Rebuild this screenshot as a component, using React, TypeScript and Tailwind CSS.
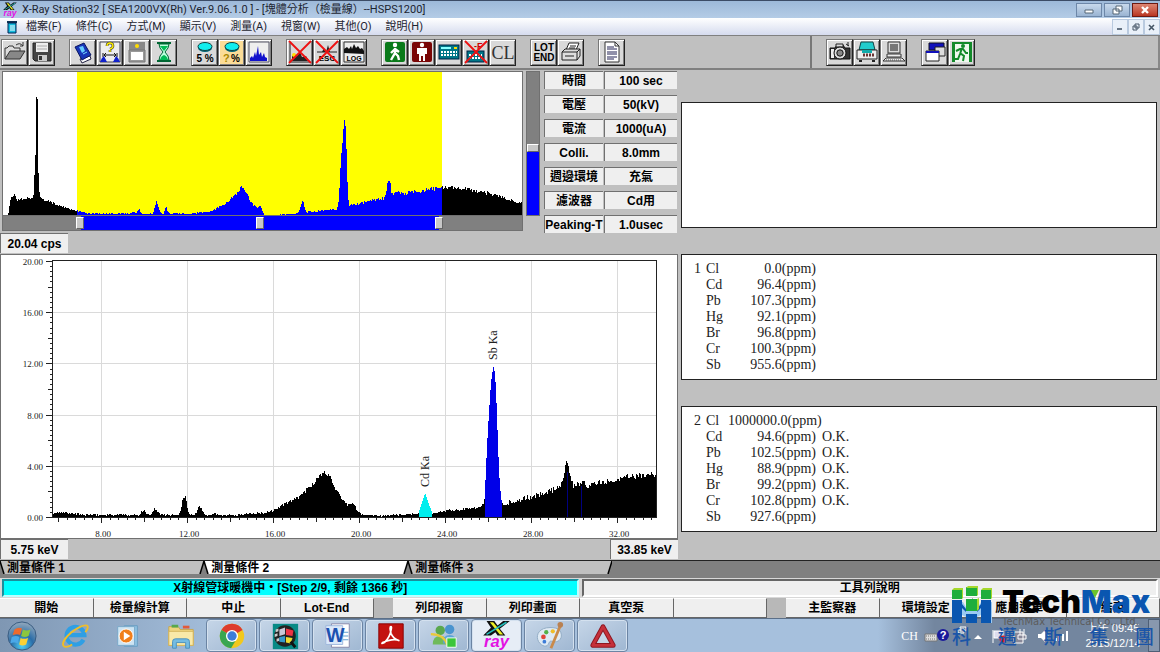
import React from "react";

type Pt = [number, number];

const noise = (n: number) => {
  const v = Math.sin(n * 12.9898 + 4.1) * 43758.5453;
  return v - Math.floor(v);
};

const heightAt = (pts: Pt[], x: number) => {
  for (let i = 1; i < pts.length; i++) {
    const [x0, h0] = pts[i - 1];
    const [x1, h1] = pts[i];
    if (x <= x1) return h0 + ((h1 - h0) * (x - x0)) / (x1 - x0);
  }
  return 0;
};

/* Builds a one-pixel-step histogram outline between two channels. */
const spectrum = (pts: Pt[], from: number, to: number, base: number, grain: number) => {
  let d = `M${from} ${base}`;
  for (let x = from; x < to; x++) {
    const h = heightAt(pts, x + 0.5);
    const jitter = h > 0.5 ? (noise(x) - 0.4) * grain * Math.min(1, 0.3 + h / 30) : 0;
    const y = base - Math.max(0, Math.round(h + jitter));
    d += `V${y}H${x + 1}`;
  }
  return d + `V${base}Z`;
};

const overview: Pt[] = [
  [6, 0], [7, 5], [9, 17], [13, 21], [15, 14], [18, 16], [31, 17], [32, 22], [33, 58], [34, 64], [34.4, 117], [35.6, 117], [36, 56],
  [37, 28], [38, 18], [40, 15], [48, 13], [53, 11], [63, 7], [75, 4], [88, 1.2], [127, 1.2], [131, 4], [134, 1.2], [137, 6],
  [140, 1], [151, 1], [153, 8], [155, 14], [157, 6], [159, 1], [162, 1], [164, 8], [167, 1.5], [190, 1.5], [205, 3], [214, 6],
  [226, 13], [233, 20], [240, 28], [244, 23], [248, 13], [254, 8], [259, 8], [262, 0], [294, 1], [297, 2], [299, 10], [301, 14], [304, 3],
  [320, 4], [335, 6], [337, 15], [339, 55], [341, 75], [342, 94], [343, 93], [344, 80], [346, 16], [347, 10], [354, 10], [368, 14],
  [383, 17], [385, 25], [386, 35], [388, 33], [390, 20], [396, 22], [402, 21], [420, 24], [440, 27], [455, 27], [480, 23], [500, 18],
  [513, 13], [522, 12],
];

const detail: Pt[] = [
  [53, 4], [65, 4], [85, 2], [139, 2], [142, 6], [145, 6], [147, 2], [151, 2], [155, 9], [159, 3], [161, 2], [178, 2], [181, 6],
  [183, 21], [186, 21], [188, 7], [190, 2], [196, 3], [200, 11], [204, 3], [207, 2], [211, 2], [214, 4], [218, 2], [240, 2],
  [250, 3], [265, 4], [275, 7], [285, 13], [297, 18], [307, 27], [317, 37], [324, 44], [330, 41], [338, 23], [342, 16], [347, 12],
  [354, 13], [358, 5], [362, 2], [380, 1], [400, 2], [418, 3], [421, 11], [425, 24], [429, 12], [433, 3], [445, 6], [460, 7],
  [480, 10], [484, 13], [485, 26], [487, 70], [489, 104], [491, 134], [493, 149], [494, 151], [496, 130], [497, 98], [498, 75],
  [499, 45], [501, 20], [502, 13], [510, 14], [530, 19], [550, 25], [559, 29], [563, 37], [566, 54], [568, 52], [570, 42],
  [573, 31], [578, 31], [582, 36], [587, 31], [600, 34], [620, 38], [640, 41], [657, 43],
];

const CJK = "font-['Liberation_Sans','Noto_Sans_CJK_TC',sans-serif]";

function ToolButton({ label, active, children }: { label: string; active?: boolean; children: React.ReactNode }) {
  return (
    <button
      type="button"
      aria-label={label}
      className={`flex size-[27px] items-center justify-center border border-[#222] border-t-[#777] border-l-[#777] shadow-[inset_1px_1px_0_#fff,inset_-1px_-1px_0_#808080] ${
        active ? "bg-[#fbdc97]" : "bg-[#d9d9d9]"
      }`}
    >
      <svg viewBox="0 0 24 24" className="size-6" aria-hidden="true">
        {children}
      </svg>
    </button>
  );
}

const Cross = () => <path d="M1 1L23 23M23 1L1 23" stroke="#e11" strokeWidth="1.8" fill="none" />;

const Disc = () => (
  <>
    <ellipse cx="12" cy="8" rx="7" ry="4" fill="#067" />
    <ellipse cx="12" cy="6.5" rx="7" ry="4" fill="#1ee" stroke="#144" strokeWidth="1" />
  </>
);

function Toolbar() {
  return (
    <div className="flex h-[35px] border-t border-b-2 border-[#808080] bg-[#c0c0c0] pl-px">
      <div className="flex flex-1 items-center gap-3.5 border-r-2 border-[#777]">
        <div className="flex">
          <ToolButton label="Open">
            <path d="M2 19V8h2l2-2h4l1 2h6v4" fill="#ddd" stroke="#333" />
            <path d="M2 19l5-8h15l-5 8z" fill="#888" stroke="#333" />
            <path d="M13 5q4-3 7 1M20 2v4h-3" fill="none" stroke="#333" />
          </ToolButton>
          <ToolButton label="Save">
            <path d="M3 3h18v18H5l-2-2z" fill="#444" stroke="#222" />
            <path d="M6 3h12v9H6z" fill="#eee" />
            <path d="M8 15h9v6H8z" fill="#ccc" />
            <path d="M9 16h3v4H9z" fill="#333" />
            <path d="M7 6h10M7 9h10" stroke="#aaa" />
          </ToolButton>
        </div>
        <div className="flex">
          <ToolButton label="Log book">
            <path d="M9 19l10-3 1 3-9 4z" fill="#fff" stroke="#224" />
            <path d="M4 7l9-4 7 12-9 5z" fill="#1836b8" stroke="#0a1660" />
            <path d="M8 7l4-1 2 5-3 2z" fill="#6cf" />
            <path d="M12 14l4-2" stroke="#7df" />
          </ToolButton>
          <ToolButton label="Qualitative analysis">
            <path d="M2 2h20v20H2z" fill="#eee" stroke="#445" />
            <path d="M9 6q0-3 3-3t3 3q0 2-3 3M12 10v2" fill="none" stroke="#333" strokeWidth="2.600" />
            <path d="M9 6q0-3 3-3t3 3q0 2-3 3M12 10v2" fill="none" stroke="#fe0" strokeWidth="1.400" />
            <path d="M5 13v4M19 13v4M6 15h12M8 13l-2 2 2 2M16 13l2 2-2 2" fill="none" stroke="#111" />
            <path d="M2 22l2-4 2-2 3 6zM15 22l3-6 2 2 2 4z" fill="#12c" />
          </ToolButton>
          <ToolButton label="Sample">
            <path d="M4 2h16v8H4z" fill="#888" />
            <path d="M4 10h16v12H4z" fill="#999" stroke="#777" />
            <path d="M6 12h12v8H6z" fill="#fff" />
            <circle cx="12" cy="6" r="2" fill="#fd0" />
          </ToolButton>
          <ToolButton label="Timer">
            <path d="M5 3h14M5 21h14" stroke="#063" strokeWidth="2" />
            <path d="M7 4h10q0 4-4 8 4 4 4 8H7q0-4 4-8-4-4-4-8z" fill="#bfd" stroke="#063" />
            <path d="M8 6h8l-4 5zM8 20q1-4 4-5 3 1 4 5z" fill="#0b5" />
          </ToolButton>
        </div>
        <div className="flex">
          <ToolButton label="Five percent">
            <Disc />
            <text x="12" y="22" textAnchor="middle" className="font-['Liberation_Sans',sans-serif] text-[10px] font-bold">5 %</text>
          </ToolButton>
          <ToolButton label="Unknown percent" active>
            <Disc />
            <text x="3" y="22" className="fill-[#a80] font-['Liberation_Sans',sans-serif] text-[11px] font-bold">?</text>
            <text x="11" y="22" className="font-['Liberation_Sans',sans-serif] text-[10px] font-bold">%</text>
          </ToolButton>
          <ToolButton label="Spectrum">
            <path d="M2 2h20v20H2z" fill="#eee" stroke="#556" />
            <path d="M3 21v-3l2-2 1 2 2-6 1 4 2-10 1 9 2-3 1 5 2-4 1 4 2 1v3z" fill="#11c" />
          </ToolButton>
        </div>
        <div className="flex">
          <ToolButton label="Peak off">
            <path d="M2 22V3M2 22h20" stroke="#222" fill="none" />
            <path d="M4 21v-5l3-2 2 2 3-4 2 5 4-1 3 5z" fill="#222" />
            <circle cx="6" cy="15" r="2" fill="#fd0" />
            <Cross />
          </ToolButton>
          <ToolButton label="Escape off">
            <path d="M2 12h20" stroke="#222" />
            <path d="M7 12l2-4 2 4 2-7 2 7z" fill="#222" />
            <text x="12" y="21" textAnchor="middle" className="font-['Liberation_Sans',sans-serif] text-[8px] font-bold">ESC</text>
            <Cross />
          </ToolButton>
          <ToolButton label="Logarithmic scale">
            <path d="M2 2h20v20H2z" fill="#eee" stroke="#333" />
            <path d="M2 13V9l3-2 2 2 2-3 1 3 2-5 2 4 2-2 2 3 2-1 2 3v3z" fill="#111" />
            <text x="12" y="21" textAnchor="middle" className="font-['Liberation_Sans',sans-serif] text-[7px] font-bold">LOG</text>
          </ToolButton>
        </div>
        <div className="flex">
          <ToolButton label="Start">
            <rect x="2" y="2" width="20" height="20" rx="2" fill="#0a7a1a" />
            <circle cx="12" cy="5" r="2.2" fill="#fff" />
            <path d="M12 8v6M12 9l-4 4M12 9l4 3 M12 13l-4 7M12 13l3 3 1 4" stroke="#fff" strokeWidth="2.4" fill="none" />
          </ToolButton>
          <ToolButton label="Stop">
            <rect x="2" y="2" width="20" height="20" rx="2" fill="#7a0606" />
            <circle cx="12" cy="5" r="2.2" fill="#fff" />
            <path d="M7 8h10v6h-2v7h-2v-5h-2v5H9v-7H7z" fill="#fff" />
          </ToolButton>
          <ToolButton label="Calculate">
            <rect x="2" y="5" width="20" height="14" fill="#078" stroke="#024" />
            <path d="M4 8h10" stroke="#8ff" strokeWidth="2" />
            <path d="M4 12h16M4 15h16" stroke="#fff" strokeWidth="2" strokeDasharray="2 1" />
            <path d="M17 8h3" stroke="#fd0" strokeWidth="2" />
          </ToolButton>
          <ToolButton label="Calculation off">
            <rect x="3" y="11" width="17" height="11" fill="#078" stroke="#024" />
            <path d="M5 15h13M5 18h13" stroke="#fff" strokeWidth="2" strokeDasharray="2 1" />
            <text x="10" y="9" className="fill-[#c00] font-['Liberation_Sans',sans-serif] text-[9px] font-bold">-F</text>
            <Cross />
          </ToolButton>
          <ToolButton label="Clear">
            <text x="12" y="19" textAnchor="middle" className="fill-[#333] font-['Liberation_Serif',serif] text-[18px]">CL</text>
          </ToolButton>
        </div>
        <div className="flex">
          <ToolButton label="Lot end">
            <text x="12" y="11" textAnchor="middle" className="font-['Liberation_Sans',sans-serif] text-[10px] font-bold">LOT</text>
            <text x="12" y="21" textAnchor="middle" className="font-['Liberation_Sans',sans-serif] text-[10px] font-bold">END</text>
          </ToolButton>
          <ToolButton label="Print">
            <path d="M7 10l3-7h10l-3 7z" fill="#fff" stroke="#222" />
            <path d="M3 12l3-3h15v7l-3 4H3z" fill="#ddd" stroke="#222" />
            <path d="M3 12h15l3-3M18 12v8M6 16h9M11 6h6M10 8h6" fill="none" stroke="#222" />
          </ToolButton>
        </div>
        <ToolButton label="Report">
          <path d="M5 2h10l4 4v16H5z" fill="#fff" stroke="#333" />
          <path d="M15 2v4h4" fill="none" stroke="#333" />
          <path d="M7 7h7M7 9h10M7 12h10M7 14h10M7 17h10M7 19h7" stroke="#225" />
        </ToolButton>
      </div>
      <div className="flex w-[30%] items-center gap-3.5 border-r-2 border-[#888] pl-3.5">
        <div className="flex">
          <ToolButton label="Camera">
            <path d="M2 8h5l2-3h6l2 3h5v11H2z" fill="#333" stroke="#111" />
            <path d="M8 4h7v3H8z" fill="#ddd" stroke="#222" />
            <path d="M3 9h3v9H3z" fill="#eee" />
            <circle cx="12" cy="13" r="6" fill="#ddd" stroke="#111" />
            <circle cx="12" cy="13" r="3.2" fill="#888" stroke="#111" />
            <path d="M18 4l3 2M20 2v4" stroke="#222" />
          </ToolButton>
          <ToolButton label="Instrument">
            <path d="M6 2h12l2 8H4z" fill="#2cc" stroke="#144" />
            <path d="M2 10h20v9H2z" fill="#eee" stroke="#222" />
            <path d="M7 10h10v3H7z" fill="#1aa" />
            <path d="M8 15h11" stroke="#633" strokeWidth="3" strokeDasharray="2 1" />
            <path d="M4 20h3v2H4zM17 20h3v2h-3z" fill="#222" />
          </ToolButton>
          <ToolButton label="Computer">
            <path d="M6 2h12v11H6z" fill="#ddd" stroke="#333" />
            <path d="M8 4h8v7H8z" fill="#777" />
            <path d="M5 14h14v3H5zM4 18h16l3 3H1z" fill="#eee" stroke="#333" />
            <path d="M4 20h16" stroke="#555" strokeDasharray="1 1" />
          </ToolButton>
        </div>
        <div className="flex">
          <ToolButton label="Windows">
            <path d="M6 3h15v7H6z" fill="#11b" stroke="#112" />
            <path d="M12 7h10v9H12z" fill="#ddd" stroke="#222" />
            <path d="M3 11h13v10H3z" fill="#fff" stroke="#222" />
            <path d="M3 12h13" stroke="#11b" strokeWidth="2" />
          </ToolButton>
          <ToolButton label="Exit">
            <path d="M2 2h20v20H2z" fill="#138a2a" />
            <path d="M5 4h14v18H5z" fill="#eef8ee" />
            <circle cx="13" cy="6" r="2" fill="#138a2a" />
            <path d="M12 8l-2 6M6 11l4-2h3l3 4h2M10 13l4 3-1 5M10 14l-2 5H5" stroke="#138a2a" strokeWidth="2" fill="none" />
          </ToolButton>
        </div>
      </div>
    </div>
  );
}

function XrayMark({ className }: { className: string }) {
  return (
    <svg viewBox="0 0 28 28" className={className} aria-hidden="true">
      <path d="M5 1h7l3 4 5-4h6l-9 7 5 6h-7l-2-3-4 3H2l7-7z" fill="#111" />
      <path d="M8 2h3l9 11h-3z" fill="#ee2" />
      <path d="M23 2L5 13" stroke="#2bb" strokeWidth="1.5" />
      <text x="14" y="24" textAnchor="middle" className="fill-[#e312e3] font-['Liberation_Sans',sans-serif] text-[15px] font-bold italic">ray</text>
    </svg>
  );
}

const MENUS = ["檔案(F)", "條件(C)", "方式(M)", "顯示(V)", "測量(A)", "視窗(W)", "其他(O)", "說明(H)"];

function Header() {
  return (
    <header className="font-['Roboto','Noto_Sans_CJK_TC',sans-serif] text-[11px] text-[#1c2430]">
      <div className="flex h-[18px] items-center border-t border-[#3c4c66] bg-linear-to-b from-[#9db9d9] to-[#b4cce6] pr-0.5">
        <XrayMark className="ml-0.5 size-4" />
        <h1 className="ml-1 flex-1 leading-4 whitespace-nowrap">X-Ray Station32 [ SEA1200VX(Rh) Ver.9.06.1.0 ] - [塊體分析（檢量線）--HSPS1200]</h1>
        <div className="flex gap-0.5">
          <button type="button" aria-label="Minimize" className="flex h-3.5 w-[26px] items-center justify-center border border-[#6d87a8] bg-linear-to-b from-[#c8d9ec] to-[#9ab4d2]">
            <svg viewBox="0 0 12 10" className="h-2.5 w-3"><path d="M2 5h8v3H2z" fill="#fff" stroke="#567" /></svg>
          </button>
          <button type="button" aria-label="Restore" className="flex h-3.5 w-[26px] items-center justify-center border border-[#6d87a8] bg-linear-to-b from-[#c8d9ec] to-[#9ab4d2]">
            <svg viewBox="0 0 12 10" className="h-2.5 w-3"><path d="M5 1h6v5H5zM2 4h6v5H2z" fill="#fff" stroke="#567" /></svg>
          </button>
          <button type="button" aria-label="Close" className="flex h-3.5 w-[26px] items-center justify-center border border-[#6b1a12] bg-linear-to-b from-[#dc8573] to-[#b93420]">
            <svg viewBox="0 0 12 10" className="h-2.5 w-3"><path d="M3 2l6 6M9 2L3 8" stroke="#fff" strokeWidth="2.4" /></svg>
          </button>
        </div>
      </div>
      <div className="flex h-[17px] items-center bg-linear-to-b from-white to-[#d5dbee]">
        <svg viewBox="0 0 12 14" className="ml-1.5 h-3.5 w-3" aria-hidden="true">
          <path d="M1 1h10v2H1z" fill="#135" />
          <path d="M2 3h8v10H2z" fill="#1bd" stroke="#025" />
          <path d="M4 6h5M4 8h5M4 10h5" stroke="#fff" />
        </svg>
        <nav className="ml-2 flex flex-1 gap-3.5 whitespace-nowrap">
          {MENUS.map((m) => (
            <button key={m} type="button" className="leading-4">{m}</button>
          ))}
        </nav>
        <div className="flex">
          <button type="button" aria-label="Minimize document" className="flex h-4 w-4 items-center justify-center border border-[#b9cadf] bg-[#e9f0f9]">
            <svg viewBox="0 0 10 10" className="size-2.5"><path d="M2 7h5" stroke="#456" strokeWidth="1.6" /></svg>
          </button>
          <button type="button" aria-label="Restore document" className="flex h-4 w-4 items-center justify-center border border-[#b9cadf] bg-[#e9f0f9]">
            <svg viewBox="0 0 10 10" className="size-2.5"><path d="M4 2h4v4H4zM2 4h4v4H2z" fill="#e9f0f9" stroke="#456" /></svg>
          </button>
          <button type="button" aria-label="Close document" className="flex h-4 w-4 items-center justify-center border border-[#b9cadf] bg-[#e9f0f9]">
            <svg viewBox="0 0 10 10" className="size-2.5"><path d="M2 3l5 5M7 3L2 8" stroke="#456" strokeWidth="1.6" /></svg>
          </button>
        </div>
      </div>
    </header>
  );
}

const RANGE_THUMB =
  "[&::-webkit-slider-thumb]:pointer-events-auto [&::-webkit-slider-thumb]:appearance-none [&::-webkit-slider-thumb]:h-3 [&::-webkit-slider-thumb]:w-2 [&::-webkit-slider-thumb]:bg-[#c8c8c8] [&::-webkit-slider-thumb]:border [&::-webkit-slider-thumb]:border-white [&::-webkit-slider-thumb]:border-r-[#666] [&::-webkit-slider-thumb]:border-b-[#666]";

function Overview() {
  return (
    <div className="flex gap-[3px] pt-px pl-0.5">
      <div className="min-w-0 flex-1">
        <svg viewBox="0 0 521 145" className="block w-full" shapeRendering="crispEdges" role="img" aria-label="Full spectrum">
          <rect width="521" height="145" fill="#fff" />
          <rect x="75" width="365" height="145" fill="#ff0" />
          <path d={spectrum(overview, 5, 75, 144, 3)} fill="#000" />
          <path d={spectrum(overview, 75, 440, 144, 4)} fill="#00f" />
          <path d={spectrum(overview, 440, 521, 144, 4)} fill="#000" />
          <rect x="0.5" y="0.5" width="520" height="144" fill="none" stroke="#707070" />
        </svg>
        <div className="relative flex h-[15px] border border-t-0 border-[#707070] bg-[#808080]">
          <div className="ml-[15%] w-[69%] bg-[#00f]" />
          {[14.3, 49.5, 84.6].map((v, i) => (
            <input
              key={v}
              type="range"
              min={0}
              max={100}
              step={0.1}
              defaultValue={v}
              aria-label={["Low energy limit", "Center energy", "High energy limit"][i]}
              className={`pointer-events-none absolute inset-0 m-0 h-full w-full appearance-none bg-transparent ${RANGE_THUMB}`}
            />
          ))}
        </div>
      </div>
      <div className="relative flex h-[145px] w-3.5 flex-col justify-end border border-[#707070] bg-[#808080]">
        <div className="h-[45%] bg-[#00f]" />
        <input
          type="range"
          min={0}
          max={100}
          defaultValue={47}
          aria-label="Vertical scale"
          className="absolute inset-0 m-0 h-full w-full appearance-none bg-transparent [direction:rtl] [writing-mode:vertical-lr] [&::-webkit-slider-thumb]:h-2 [&::-webkit-slider-thumb]:w-3 [&::-webkit-slider-thumb]:appearance-none [&::-webkit-slider-thumb]:border [&::-webkit-slider-thumb]:border-white [&::-webkit-slider-thumb]:border-r-[#666] [&::-webkit-slider-thumb]:border-b-[#666] [&::-webkit-slider-thumb]:bg-[#c8c8c8]"
        />
      </div>
      <Parameters />
    </div>
  );
}

const PARAMS = [
  ["時間", "100 sec"],
  ["電壓", "50(kV)"],
  ["電流", "1000(uA)"],
  ["Colli.", "8.0mm"],
  ["週邊環境", "充氣"],
  ["濾波器", "Cd用"],
  ["Peaking-T", "1.0usec"],
];

function Parameters() {
  const cell = "h-[18px] border-t border-l border-[#707070] bg-[#efefef] p-0 text-center leading-4 font-bold whitespace-nowrap";
  return (
    <table className="-my-1.5 w-[135px] table-fixed border-separate border-spacing-x-px border-spacing-y-1.5 text-xs">
      <tbody>
        {PARAMS.map(([k, v]) => (
          <tr key={k}>
            <th scope="row" className={`w-[59px] ${cell}`}>{k}</th>
            <td className={cell}>{v}</td>
          </tr>
        ))}
      </tbody>
    </table>
  );
}

const X_TICKS = [8, 12, 16, 20, 24, 28, 32];
const Y_TICKS = [0, 4, 8, 12, 16, 20];
const xPos = (kev: number) => Math.round(101 + (kev - 8) * 21.5);
const yPos = (cps: number) => Math.round(263 - cps * 12.8);

function DetailChart() {
  const minorX = Array.from({ length: 70 }, (_, i) => 6 + i * 0.4).filter((k) => k <= 33.8);
  const minorY = Array.from({ length: 51 }, (_, i) => i * 0.4);
  const axis = "fill-[#222] font-['Liberation_Serif',serif] text-[9px]";
  const label = "fill-[#222] font-['Liberation_Serif',serif] text-xs";
  return (
    <svg viewBox="0 0 678 285" className="block w-full bg-white" role="img" aria-label="Spectrum in cps against keV">
      <g shapeRendering="crispEdges">
        {X_TICKS.map((k) => <path key={k} d={`M${xPos(k) + 0.5} 7V263`} stroke="#dadada" />)}
        {Y_TICKS.slice(1, 5).map((c) => <path key={c} d={`M53 ${yPos(c) + 0.5}H657`} stroke="#dadada" />)}
        <path d={spectrum(detail, 53, 419, 263, 5)} fill="#000" />
        <path d={spectrum(detail, 419, 432, 263, 0)} fill="#0ee" />
        <path d={spectrum(detail, 432, 485, 263, 4)} fill="#000" />
        <path d={spectrum(detail, 485, 502, 263, 0)} fill="#0000e8" />
        <path d={spectrum(detail, 502, 657, 263, 6)} fill="#000" />
        <path d="M567.5 218V263M581.5 232V263" stroke="#000080" />
        <path d="M53 6.5H657M656.5 6V263M52.5 6V263.5H657" fill="none" stroke="#222" />
        {minorY.map((c) => <path key={c} d={`M50 ${yPos(c) + 0.5}H53`} stroke="#222" />)}
        {[2, 6, 10, 14, 18].map((c) => <path key={c} d={`M48 ${yPos(c) + 0.5}H53`} stroke="#222" />)}
        {Y_TICKS.map((c) => <path key={c} d={`M46 ${yPos(c) + 0.5}H53`} stroke="#222" />)}
        {minorX.map((k) => <path key={k} d={`M${xPos(k) + 0.5} 263V266`} stroke="#222" />)}
        {[6, 10, 14, 18, 22, 26, 30].map((k) => <path key={k} d={`M${xPos(k) + 0.5} 263V268`} stroke="#222" />)}
        {X_TICKS.map((k) => <path key={k} d={`M${xPos(k) + 0.5} 263V269`} stroke="#222" />)}
        <rect x="0.5" y="0.5" width="677" height="284" fill="none" stroke="#707070" />
      </g>
      {Y_TICKS.map((c) => <text key={c} x="43" y={yPos(c) + 4} textAnchor="end" className={axis}>{c.toFixed(2)}</text>)}
      {X_TICKS.map((k) => <text key={k} x={xPos(k) + 2} y="283" textAnchor="middle" className={axis}>{k.toFixed(2)}</text>)}
      <text transform="translate(429 233) rotate(-90)" className={label}>Cd Ka</text>
      <text transform="translate(497 106) rotate(-90)" className={label}>Sb Ka</text>
    </svg>
  );
}

type Row = [string, string, string?];

const RESULT_1: Row[] = [
  ["Cl", "0.0(ppm)"], ["Cd", "96.4(ppm)"], ["Pb", "107.3(ppm)"], ["Hg", "92.1(ppm)"],
  ["Br", "96.8(ppm)"], ["Cr", "100.3(ppm)"], ["Sb", "955.6(ppm)"],
];
const RESULT_2: Row[] = [
  ["Cl", "1000000.0(ppm)"], ["Cd", "94.6(ppm)", "O.K."], ["Pb", "102.5(ppm)", "O.K."], ["Hg", "88.9(ppm)", "O.K."],
  ["Br", "99.2(ppm)", "O.K."], ["Cr", "102.8(ppm)", "O.K."], ["Sb", "927.6(ppm)"],
];

function Result({ index, rows }: { index: number; rows: Row[] }) {
  return (
    <div className="border border-[#222] bg-white py-1.5 pl-3">
      <table className="table-fixed border-collapse font-['Liberation_Serif',serif] text-sm leading-4 whitespace-nowrap text-[#222]">
        <colgroup>
          <col className="w-3" />
          <col className="w-[22px]" />
          <col className="w-[88px]" />
          <col className="w-10" />
        </colgroup>
        <tbody>
          {rows.map(([el, value, verdict], i) => {
            const wide = value.length > 12;
            return (
              <tr key={el}>
                <td className="p-0">{i === 0 ? index : ""}</td>
                <th scope="row" className="p-0 text-left font-normal">{el}</th>
                <td colSpan={wide ? 2 : 1} className={wide ? "p-0 text-left" : "p-0 text-right"}>{value}</td>
                {!wide && <td className="p-0 pl-1.5">{verdict ?? ""}</td>}
              </tr>
            );
          })}
        </tbody>
      </table>
    </div>
  );
}

function Readout({ children }: { children: React.ReactNode }) {
  return <output className="flex h-5 w-[68px] items-center justify-center border-t border-l border-[#707070] bg-[#efefef] text-xs font-bold whitespace-nowrap">{children}</output>;
}

function Tabs() {
  return (
    <div role="tablist" className="flex h-[18px] items-start border-t border-[#222] bg-[#808080]">
      {["測量條件 1", "測量條件 2", "測量條件 3"].map((t, i) => (
        <button
          key={t}
          type="button"
          role="tab"
          aria-selected={i === 1}
          className={`flex h-[13px] w-[17.6%] items-center justify-between text-xs leading-3 font-bold ${i === 1 ? "bg-white" : "bg-[#c0c0c0]"}`}
        >
          <span className="flex items-center gap-0.5">
            <svg viewBox="0 0 5 13" className="h-[13px] w-[5px]"><path d="M0 0l4 13H0z" fill="#808080" /><path d="M0 0l4 13" stroke="#000" strokeWidth="1.5" /></svg>
            {t}
          </span>
          <svg viewBox="0 0 5 13" className="h-[13px] w-[5px]"><path d="M5 0L1 13h4z" fill="#808080" /><path d="M5 0L1 13" stroke="#000" strokeWidth="1.5" /></svg>
        </button>
      ))}
    </div>
  );
}

const FUNCTIONS = [
  ["開始", "檢量線計算", "中止", "Lot-End"],
  ["列印視窗", "列印畫面", "真空泵", ""],
  ["主監察器", "環境設定", "應用選單", "結束"],
];

function TaskIcon({ name }: { name: string }) {
  const shapes: Record<string, React.ReactNode> = {
    start: (
      <>
        <defs>
          <radialGradient id="orb" cx="50%" cy="85%" r="80%">
            <stop offset="0" stopColor="#4fd0f5" />
            <stop offset="0.5" stopColor="#2a6da8" />
            <stop offset="1" stopColor="#8aa3ba" />
          </radialGradient>
        </defs>
        <circle cx="16" cy="16" r="15" fill="url(#orb)" stroke="#35597e" />
        <path d="M8 9q4-3 8-1l-2 7q-3-2-8 0z" fill="#ee6a2c" />
        <path d="M17 9q4 2 8 0l-2 7q-4 2-8 0z" fill="#8cc63e" />
        <path d="M5 17q5-2 8 0l-1.500 7q-4-2-8 0z" fill="#4aa8e8" />
        <path d="M14.500 18q3 2 8 0l-2 7q-4 2-7.500 0z" fill="#fcd033" />
      </>
    ),
    ie: (
      <>
        <path d="M25 20a9.500 9.500 0 1 1 1-5H8" fill="none" stroke="#2f9fe4" strokeWidth="4.500" />
        <path d="M4 27C-1 20 22 2 29 5q2 2-2 7M4 27q3 2 9-2" fill="none" stroke="#f0bd28" strokeWidth="2" />
      </>
    ),
    media: (
      <>
        <path d="M12 5h14v22H12z" fill="#8ec1e2" stroke="#6a9dc2" />
        <path d="M5 6h18v20H5z" fill="#cde4f3" stroke="#78a7c9" />
        <circle cx="14" cy="16" r="7.500" fill="#f07e1a" stroke="#fff" />
        <path d="M11.500 11.500l7 4.500-7 4.500z" fill="#fff" />
      </>
    ),
    folder: (
      <>
        <path d="M3 6h10l2 3h14v17H3z" fill="#eed57e" stroke="#c9a64c" />
        <path d="M6 4h7v3H6z" fill="#58a84c" /><path d="M18 5h7v3h-7z" fill="#e25a3a" />
        <path d="M3 11h26v15H3z" fill="#f9e9a8" stroke="#d3b45c" />
        <path d="M7 29v-7q0-3 3-3h12q3 0 3 3v7h-4v-6H11v6z" fill="#74bce2" stroke="#4a90bd" />
      </>
    ),
    chrome: (
      <>
        <circle cx="16" cy="16" r="13" fill="#f2c81c" />
        <path d="M16 16L4.700 9.500A13 13 0 0 1 27.300 9.500z" fill="#dd3b2d" />
        <path d="M16 16L4.700 9.500A13 13 0 0 0 15 29l6-10z" fill="#3aa650" />
        <circle cx="16" cy="16" r="6.500" fill="#fff" /><circle cx="16" cy="16" r="5" fill="#3d7dd8" />
      </>
    ),
    flag: (
      <>
        <path d="M3 3h27v27H3z" fill="#078a86" />
        <circle cx="16" cy="16" r="11.500" fill="#222" />
        <path d="M6 9l3-1v3l-3 1zM5 14l3-1v3l-3 1zM7 19l3-1v3l-3 1z" fill="#ccc" />
        <path d="M10 9l6-2v7l-6 2z" fill="#c8c8d8" /><path d="M17 8l8 2-1 6-7-1z" fill="#e34" />
        <path d="M10 17l6-1v7l-6-1z" fill="#39c" /><path d="M17 17l7 1-2 6-5-1z" fill="#ed3" />
        <path d="M22 22l5 6" stroke="#111" strokeWidth="3" />
      </>
    ),
    word: (
      <>
        <path d="M9 3h19v25H9z" fill="#fff" stroke="#88a" /><path d="M21 12h6M21 16h6M21 20h6" stroke="#59c" />
        <path d="M3 5h18v20H3z" fill="#dce9fa" stroke="#9db6dc" />
        <text x="13" y="22" textAnchor="middle" className="fill-[#1c52b0] font-['Liberation_Sans',sans-serif] text-[21px] font-bold">W</text>
      </>
    ),
    pdf: (
      <>
        <path d="M3 3h26v26H3z" fill="#c3120f" stroke="#800" />
        <path d="M16 6q-2 0 0 7 2 6 9 8-6-3-18 2-2 2 2 0 6-6 7-13 1-4 0-4z" fill="none" stroke="#fff" strokeWidth="1.800" />
      </>
    ),
    people: (
      <>
        <circle cx="12" cy="10" r="5" fill="#5aa84e" /><circle cx="22" cy="9" r="5" fill="#4a94cf" />
        <path d="M4 25q0-9 8-9t8 9z" fill="#6fba5a" /><path d="M15 24q0-9 7-9t7 9z" fill="#5ba3d9" />
        <path d="M2 14q14 0 18 12" fill="none" stroke="#e9c93c" strokeWidth="2.500" />
        <path d="M19 18h10v10H19z" fill="#3cc63a" stroke="#fff" />
      </>
    ),
    paint: (
      <>
        <path d="M16 7C5 7 1 14 3 20s9 9 11 5 2-4 6-3 9-2 8-8-6-7-12-7z" fill="#dfeaf4" stroke="#8faac2" />
        <circle cx="9" cy="17" r="2.500" fill="#e0453a" /><circle cx="12" cy="12" r="2.300" fill="#54b148" /><circle cx="19" cy="11" r="2.300" fill="#f0bd28" />
        <circle cx="10" cy="22" r="2" fill="#3d7dd8" />
        <path d="M17 29L27 5" stroke="#c98a4a" strokeWidth="3" /><circle cx="27" cy="4" r="3" fill="#b98152" />
      </>
    ),
    triangle: (
      <>
        <path d="M16 6L5 26h22z" fill="#c5d5e7" stroke="#8d1620" strokeWidth="5" strokeLinejoin="round" />
        <path d="M16 6L5 26h22z" fill="none" stroke="#c5303a" strokeWidth="3" strokeLinejoin="round" />
      </>
    ),
  };
  return <svg viewBox="0 0 32 32" className="size-[30px]" aria-hidden="true">{shapes[name]}</svg>;
}

function Taskbar() {
  return (
    <div className="flex h-[34px] items-center border-t border-[#5b6f88] bg-linear-to-r from-[#7f97b3] via-[#a6c0dd] via-20% to-[#a6c0dd]">
      <div className="flex items-center gap-[23px] pr-2.5 pl-[7px]">
        {["start", "ie", "media", "folder"].map((n) => (
          <button key={n} type="button" aria-label={n} className="flex h-8 w-[30px] items-center justify-center"><TaskIcon name={n} /></button>
        ))}
      </div>
      <div className="flex gap-0.5">
        {["chrome", "flag", "word", "pdf", "people", "xray", "paint", "triangle"].map((n) => (
          <button
            key={n}
            type="button"
            aria-label={n}
            className={`flex h-[33px] w-[51px] items-center justify-center rounded-sm border border-[#6b84a3] shadow-[inset_0_0_0_1px_#d4e1ef] ${n === "xray" ? "bg-[#e6edf6]" : "bg-linear-to-br from-[#c6d6e8] to-[#9fb7d2]"}`}
          >
            {n === "xray" ? <XrayMark className="size-[31px]" /> : <TaskIcon name={n} />}
          </button>
        ))}
      </div>
      <div className="ml-auto flex h-full w-[282px] items-center justify-end bg-linear-to-r from-transparent to-[#73869f] to-20% text-white">
        <span className="font-['Liberation_Serif',serif] text-xs">CH</span>
        <svg viewBox="0 0 104 20" className="ml-1.5 h-5 w-[104px]" aria-hidden="true">
          <path d="M1 8h12v7H1z" fill="#ddd" stroke="#777" /><path d="M2 10h10M2 13h10" stroke="#777" strokeDasharray="1 1" />
          <circle cx="19" cy="9" r="6" fill="#1a1a9a" />
          <text x="19" y="13" textAnchor="middle" className="fill-white font-['Liberation_Sans',sans-serif] text-[11px] font-bold">?</text>
          <path d="M36 1h6v4h-6zM34 3h6v4h-6z" fill="none" stroke="#fff" />
          <path d="M50 13l4-4 4 4z" fill="#fff" />
          <path d="M69 4v13M70 5h9v7h-9z" stroke="#fff" fill="#dde" /><circle cx="79" cy="13" r="3.500" fill="#d22" />
          <path d="M90 6h9v11h-9zM96 3v6M100 3v6M94 9h8v4h-8z" fill="#889" stroke="#fff" />
        </svg>
        <svg viewBox="0 0 36 20" className="ml-2 h-5 w-9" aria-hidden="true">
          <path d="M2 8h3l4-4v12l-4-4H2z" fill="#fff" /><path d="M11 7q2 3 0 6" stroke="#fff" fill="none" />
          <path d="M19 15v-3h2v3zM22 15v-5h2v5zM26 15V8h2v7zM30 15V5h2v10z" fill="#fff" />
        </svg>
        <div className="ml-2.5 w-[62px] text-center text-[11px] leading-[15px] font-normal whitespace-nowrap">
          上午 09:45
          <br />
          2015/12/14
        </div>
        <button type="button" aria-label="Show desktop" className="ml-1 h-full w-3 border border-[#4e5f76] bg-[#8898ae]" />
      </div>
    </div>
  );
}

function Brand() {
  return (
    <div className="pointer-events-none absolute top-2 right-1.5 w-[202px]">
      <div className="flex gap-2.5">
        <svg viewBox="0 0 40 38" className="h-[38px] w-10 shrink-0" aria-hidden="true">
          <path d="M0 16h11l4 7h10l4-7h11v21H29V29l-4 2v6H14v-6l-4-2v8H0z" fill="#9ccaf2" />
          <path d="M0 14h10v23H0zM29 14h10v23H29zM14 28h11v9H14z" fill="#0a56b0" />
          <path d="M10 18l4 5v3l-4-4zM29 18l-4 5v3l4-4z" fill="#0a56b0" />
          <path d="M0 4h10v9H0zM14 1h11v9H14zM29 4h10v9H29zM14 13h11v12H14z" fill="#1fae3c" />
          <path d="M0 4l2-2h9v10l-1 1V4zM14 2l2-2h10v9l-1 1V2zM29 4l2-2h9v10l-1 1V4zM25 13l2-1v11l-2 2z" fill="#a5d82c" />
        </svg>
        <div className="whitespace-nowrap">
          <div className="relative font-['Inter',sans-serif] text-[32px] leading-8 font-black text-black">
            Tech<span className="text-[#0a56b0]">Max</span>
            <svg viewBox="0 0 10 8" className="absolute top-1 left-[89px] h-2 w-2.5" aria-hidden="true"><path d="M0 0h8L4 8z" fill="#6cc32c" /></svg>
          </div>
          <div className="font-['DejaVu_Sans',sans-serif] text-[10px] leading-2 text-[#5c5c5c]">TechMax Technical Co., Ltd.</div>
        </div>
      </div>
      <div className="flex justify-between text-[19px] leading-6 font-medium text-[#1a55a8]">
        {["科", "邁", "斯", "集", "團"].map((c) => <span key={c}>{c}</span>)}
      </div>
    </div>
  );
}

export default function App() {
  return (
    <div className={`flex min-h-screen flex-col overflow-hidden bg-[#c0c0c0] text-black ${CJK}`}>
      <Header />
      <Toolbar />
      <main className="grid grid-cols-[678fr_482fr]">
        <section className="min-w-0">
          <Overview />
          <div className="flex h-[21px] items-start"><Readout>20.04 cps</Readout></div>
          <DetailChart />
          <div className="flex h-[21px] items-start justify-between"><Readout>5.75 keV</Readout><Readout>33.85 keV</Readout></div>
        </section>
        <section className="flex flex-col gap-[26px] px-[3px] pt-8">
          <div className="h-[126px] border border-[#222] bg-white" />
          <Result index={1} rows={RESULT_1} />
          <Result index={2} rows={RESULT_2} />
        </section>
      </main>
      <Tabs />
      <footer className="relative">
        <div className="flex h-5 gap-[3px] bg-[#d8d8d8] px-0.5 py-px text-xs font-bold">
          <p className="flex flex-1 items-center justify-center border-2 border-[#1b8f9c] border-r-[#bff] border-b-[#bff] bg-[#0ff] whitespace-nowrap">X射線管球暖機中・[Step 2/9, 剩餘 1366 秒]</p>
          <p className="flex flex-1 items-center justify-center border-2 border-[#666] border-r-white border-b-white bg-[#efefef]">工具列說明</p>
        </div>
        <div className="flex h-5 gap-[19px] bg-[#b8b8b8]">
          {FUNCTIONS.map((group, g) => (
            <div key={g} className="flex flex-1">
              {group.map((f, i) => (
                <button key={i} type="button" aria-label={f || "Unassigned"} className="flex-1 border-t border-r border-b border-white border-r-[#666] border-b-[#666] bg-[#efefef] text-xs leading-4 font-bold whitespace-nowrap">
                  {f}
                </button>
              ))}
            </div>
          ))}
        </div>
        <Taskbar />
        <Brand />
      </footer>
    </div>
  );
}
